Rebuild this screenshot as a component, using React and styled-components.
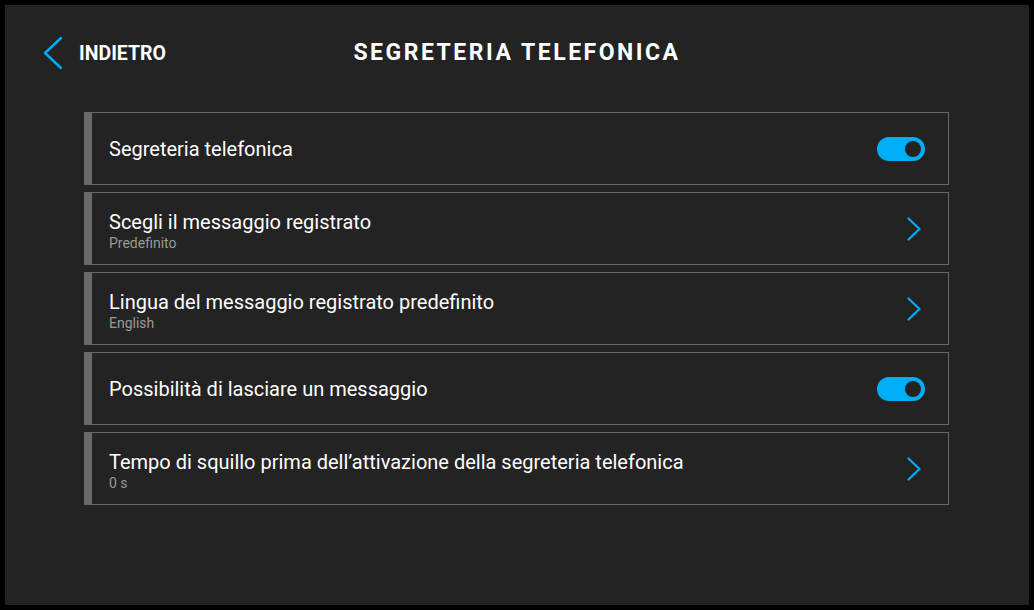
import React from 'react'
import styled, { createGlobalStyle } from 'styled-components'

const Global = createGlobalStyle`
  html, body { margin: 0; padding: 0; background: #000; }
  body { font-family: Roboto, "Liberation Sans", sans-serif; }
`;

const Frame = styled.div`
  width: 1034px;
  height: 610px;
  padding: 5px;
  box-sizing: border-box;
  background: #000;
`;

const Panel = styled.div`
  width: 100%;
  height: 100%;
  background: #232323;
  display: flex;
  flex-direction: column;
`;

const Header = styled.div`
  position: relative;
  height: 92px;
  display: flex;
  align-items: center;
  justify-content: center;
`;

const Back = styled.button`
  position: absolute;
  left: 38px;
  top: 31px;
  display: flex;
  align-items: center;
  gap: 16px;
  background: none;
  border: none;
  padding: 0;
  color: #fff;
  font-family: Roboto, sans-serif;
  font-weight: 700;
  font-size: 19.5px;
  cursor: pointer;
`;

const Title = styled.h1`
  margin: 0;
  margin-top: 3px;
  color: #fff;
  font-size: 23px;
  font-weight: 700;
  letter-spacing: 2.5px;
`;

const List = styled.div`
  display: flex;
  flex-direction: column;
  gap: 7px;
  padding: 15px 80px 0 79px;
`;

const Row = styled.div`
  height: 73px;
  box-sizing: border-box;
  border: 1px solid #6a6a6a;
  border-left: 8px solid #6a6a6a;
  display: flex;
  align-items: center;
  padding: 0 23px 0 17px;
  cursor: pointer;
`;

const Texts = styled.div`
  flex: 1;
  display: flex;
  flex-direction: column;
  gap: 1px;
  padding-top: ${(p) => (p.$sub ? '3px' : '0')};
`;

const Label = styled.div`
  color: #fff;
  font-size: 20px;
`;

const Sub = styled.div`
  color: #9a9a9a;
  font-size: 14px;
`;

const Toggle = styled.div`
  width: 48px;
  height: 24px;
  border-radius: 12px;
  background: #00aef5;
  position: relative;
  &::after {
    content: '';
    position: absolute;
    right: 4px;
    top: 4px;
    width: 16px;
    height: 16px;
    border-radius: 50%;
    background: #232323;
  }
`;

const Arrow = styled.span`
  display: flex;
  margin-right: 4px;
`;

const Chevron = ({ dir = 'right', w = 14, h = 24 }) => (
  <svg width={w} height={h} viewBox={`0 0 ${w} ${h}`} fill="none">
    {dir === 'right' ? (
      <polyline points={`1.5,1.5 ${w - 1.5},${h / 2} 1.5,${h - 1.5}`} stroke="#00aef5" strokeWidth="2.2" strokeLinecap="round" strokeLinejoin="round" />
    ) : (
      <polyline points={`${w - 2},2 2,${h / 2} ${w - 2},${h - 2}`} stroke="#00aef5" strokeWidth="2.4" strokeLinecap="round" strokeLinejoin="round" />
    )}
  </svg>
);

const items = [
  { label: 'Segreteria telefonica', toggle: true },
  { label: 'Scegli il messaggio registrato', sub: 'Predefinito' },
  { label: 'Lingua del messaggio registrato predefinito', sub: 'English' },
  { label: 'Possibilità di lasciare un messaggio', toggle: true },
  { label: 'Tempo di squillo prima dell’attivazione della segreteria telefonica', sub: '0 s' },
];

const App = () => (
  <Frame>
    <Global />
    <Panel>
      <Header>
        <Back>
          <Chevron dir="left" w={20} h={34} />
          INDIETRO
        </Back>
        <Title>SEGRETERIA TELEFONICA</Title>
      </Header>
      <List>
        {items.map((it) => (
          <Row key={it.label}>
            <Texts $sub={!!it.sub}>
              <Label>{it.label}</Label>
              {it.sub && <Sub>{it.sub}</Sub>}
            </Texts>
            {it.toggle ? <Toggle /> : <Arrow><Chevron /></Arrow>}
          </Row>
        ))}
      </List>
    </Panel>
  </Frame>
);

export default App
